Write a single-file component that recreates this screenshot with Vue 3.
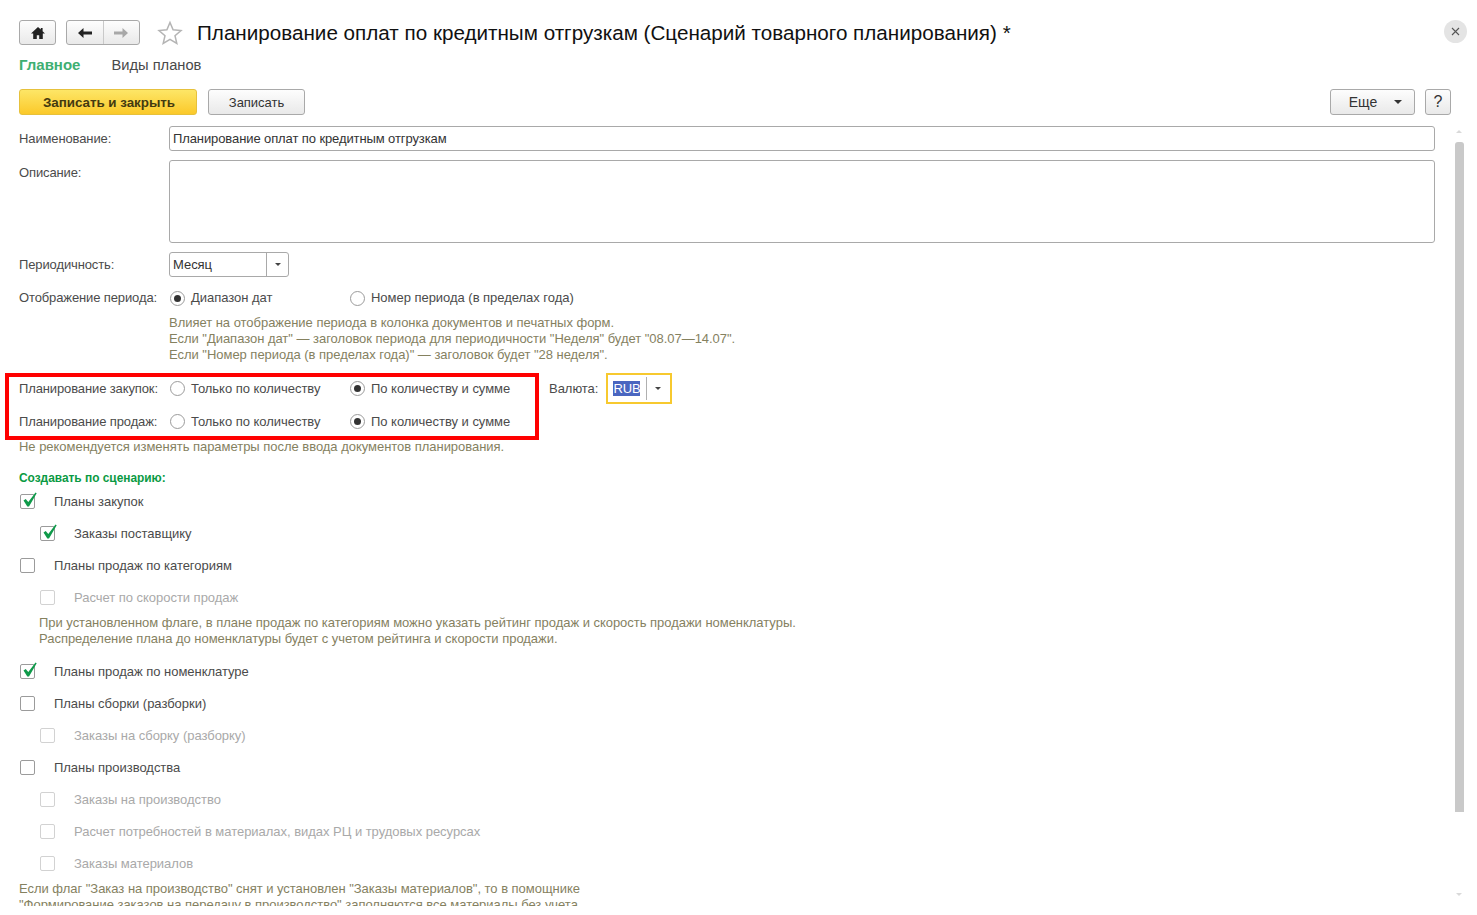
<script setup>
const hints = [
  'Влияет на отображение периода в колонка документов и печатных форм.',
  'Если "Диапазон дат" — заголовок периода для периодичности "Неделя" будет "08.07—14.07".',
  'Если "Номер периода (в пределах года)" — заголовок будет "28 неделя".'
]
const plan = ['Планирование закупок:', 'Планирование продаж:']
const groupA = [
  { text: 'Планы закупок', on: true },
  { text: 'Заказы поставщику', on: true, sub: true },
  { text: 'Планы продаж по категориям' },
  { text: 'Расчет по скорости продаж', sub: true, off: true }
]
const groupB = [
  { text: 'Планы продаж по номенклатуре', on: true },
  { text: 'Планы сборки (разборки)' },
  { text: 'Заказы на сборку (разборку)', sub: true, off: true },
  { text: 'Планы производства' },
  { text: 'Заказы на производство', sub: true, off: true },
  { text: 'Расчет потребностей в материалах, видах РЦ и трудовых ресурсах', sub: true, off: true },
  { text: 'Заказы материалов', sub: true, off: true }
]
</script>

<template>
  <div class="page">
    <header class="top">
      <button class="btn home" aria-label="Домой">
        <svg width="16" height="14" viewBox="0 0 16 14"><path d="M8 1 1 7.4h2.2V13h3.6V9.2h2.4V13h3.600V7.400H15L12.600 5.200V2h-1.800v1.500z" fill="#222"/></svg>
      </button>
      <div class="btn nav">
        <span class="nav-cell first">
          <svg width="16" height="12" viewBox="0 0 16 12"><path d="M1 6l5.500-5v3.400H15v3.200H6.500V11z" fill="#222"/></svg>
        </span>
        <span class="nav-cell">
          <svg width="16" height="12" viewBox="0 0 16 12"><path d="M15 6 9.500 1v3.400H1v3.200h8.500V11z" fill="#a8a8a8"/></svg>
        </span>
      </div>
      <svg class="star" width="26" height="26" viewBox="0 0 26 26"><path d="M13 2.500l3.100 7.300 7.900.7-6 5.200 1.800 7.700L13 19.300l-6.800 4.100L8 15.700l-6-5.200 7.900-.7z" fill="#fff" stroke="#b4b4b4" stroke-width="1.500"/></svg>
      <h1 class="title">Планирование оплат по кредитным отгрузкам (Сценарий товарного планирования) *</h1>
      <span class="close">
        <svg width="9" height="9" viewBox="0 0 9 9"><path d="M1 1l7 7M8 1 1 8" stroke="#555" stroke-width="1.100"/></svg>
      </span>
    </header>

    <nav class="tabs">
      <span class="tab active">Главное</span>
      <span class="tab">Виды планов</span>
    </nav>

    <div class="commands">
      <button class="btn primary">Записать и закрыть</button>
      <button class="btn save">Записать</button>
      <span class="spacer"></span>
      <button class="btn more">Еще<i class="arrow"></i></button>
      <button class="btn help">?</button>
    </div>

    <div class="form">
      <div class="row r-name">
        <label class="lbl">Наименование:</label>
        <div class="field">Планирование оплат по кредитным отгрузкам</div>
      </div>
      <div class="row r-desc">
        <label class="lbl">Описание:</label>
        <div class="field area"></div>
      </div>
      <div class="row r-period">
        <label class="lbl">Периодичность:</label>
        <div class="combo"><span class="combo-val">Месяц</span><span class="combo-btn"><i class="arrow small"></i></span></div>
      </div>
      <div class="row r-view">
        <label class="lbl">Отображение периода:</label>
        <span class="radio w180"><i class="dot on"></i>Диапазон дат</span>
        <span class="radio"><i class="dot"></i>Номер периода (в пределах года)</span>
      </div>
      <div class="note period-note">
        <div v-for="h in hints" :key="h">{{ h }}</div>
      </div>

      <div class="plan">
        <div class="plan-rows">
          <div v-for="p in plan" :key="p" class="row plan-row">
            <label class="lbl">{{ p }}</label>
            <span class="radio w180"><i class="dot"></i>Только по количеству</span>
            <span class="radio"><i class="dot on"></i>По количеству и сумме</span>
          </div>
        </div>
        <div class="currency">
          <span class="cur-lbl">Валюта:</span>
          <div class="cur-box"><span class="cur-sel">RUB</span><span class="cur-sep"></span><i class="arrow small"></i></div>
        </div>
        <div class="redbox"></div>
      </div>

      <div class="warn">Не рекомендуется изменять параметры после ввода документов планирования.</div>
      <div class="section">Создавать по сценарию:</div>

      <div class="checks">
        <div v-for="c in groupA" :key="c.text" class="check" :class="{ sub: c.sub, off: c.off }">
          <span class="box">
            <svg v-if="c.on" class="tick" width="17" height="17" viewBox="0 0 17 17"><path d="M2.500 8.500l2.200-1.500 2.600 3L14.500.5l1.200.8L8 14.500H6.300z" fill="#0f9a4a"/></svg>
          </span>
          <span>{{ c.text }}</span>
        </div>
      </div>
      <div class="note cat-note">
        <div>При установленном флаге, в плане продаж по категориям можно указать рейтинг продаж и скорость продажи номенклатуры.</div>
        <div>Распределение плана до номенклатуры будет с учетом рейтинга и скорости продажи.</div>
      </div>
      <div class="checks second">
        <div v-for="c in groupB" :key="c.text" class="check" :class="{ sub: c.sub, off: c.off }">
          <span class="box">
            <svg v-if="c.on" class="tick" width="17" height="17" viewBox="0 0 17 17"><path d="M2.500 8.500l2.200-1.500 2.600 3L14.500.5l1.200.8L8 14.500H6.300z" fill="#0f9a4a"/></svg>
          </span>
          <span>{{ c.text }}</span>
        </div>
      </div>
      <div class="note last-note">
        <div>Если флаг "Заказ на производство" снят и установлен "Заказы материалов", то в помощнике</div>
        <div>"Формирование заказов на передачу в производство" заполняются все материалы без учета</div>
      </div>
    </div>

    <div class="scroll">
      <i class="sc-up"></i>
      <i class="sc-thumb"></i>
      <i class="sc-down"></i>
    </div>
  </div>
</template>

<style>
html, body { margin: 0; background: #fff; overflow: hidden; }
</style>

<style scoped>
.page {
  position: relative;
  height: 906px;
  overflow: hidden;
  background: #fff;
  font: 13px/16px "Liberation Sans", Arial, sans-serif;
  letter-spacing: -0.03px;
  color: #4b4b4b;
  box-sizing: border-box;
  padding-left: 19px;
}
.top { display: flex; align-items: center; height: 25px; padding-top: 20px; position: relative; }
.btn {
  box-sizing: border-box;
  border: 1px solid #a9a9a9;
  border-radius: 3px;
  background: linear-gradient(#fdfdfd, #e9e9e9);
  font: inherit;
  letter-spacing: inherit;
  color: #333;
  padding: 0;
  display: inline-flex;
  align-items: center;
  justify-content: center;
}
.home { width: 37px; height: 25px; }
.nav { width: 74px; height: 25px; margin-left: 10px; }
.nav-cell { flex: 1; height: 100%; display: flex; align-items: center; justify-content: center; }
.nav-cell.first { border-right: 1px solid #c9c9c9; }
.star { margin-left: 17px; }
.title { margin: 0 0 0 14px; font: 400 20.650px/26px "Liberation Sans", Arial, sans-serif; letter-spacing: 0; color: #111; white-space: nowrap; }
.close {
  position: absolute; left: 1425px; top: 20px;
  width: 23px; height: 23px; border-radius: 50%; background: #e4e4e4;
  display: flex; align-items: center; justify-content: center;
}
.tabs { display: flex; height: 20px; margin-top: 10px; font-size: 14.700px; line-height: 20px; letter-spacing: 0; }
.tab { margin-right: 31px; color: #4a4a4a; }
.tab.active { color: #3eaf72; font-weight: 700; font-size: 15px; }
.commands { display: flex; align-items: center; width: 1432px; margin-top: 14px; height: 26px; }
.primary {
  width: 178px; height: 26px; font-weight: 700; color: #443a10; font-size: 13.400px; padding: 1px 0 0 2px;
  background: linear-gradient(#fde667, #fbc92a); border-color: #e6c13c;
}
.save { width: 97px; height: 26px; margin-left: 11px; padding-top: 1px; }
.spacer { flex: 1; }
.more { width: 85px; height: 26px; position: relative; padding-right: 19px; font-size: 14px; }
.more .arrow { position: absolute; right: 12px; top: 10px; }
.help { width: 26px; height: 26px; margin-left: 10px; font-size: 16px; }
.arrow { display: inline-block; width: 0; height: 0; border: 4px solid transparent; border-top: 4px solid #333; border-bottom: 0; }
.arrow.small { border-width: 3px 3px 0; border-top-color: #444; }

.form { width: 1416px; }
.row { display: flex; align-items: center; }
.lbl { width: 150px; flex: none; white-space: nowrap; letter-spacing: -0.12px; }
.field {
  box-sizing: border-box; flex: 1; height: 25px; border: 1px solid #a9a9a9; border-radius: 3px;
  padding: 0 3px; line-height: 23px; color: #333; background: #fff; letter-spacing: -0.1px;
}
.r-name { margin-top: 11px; height: 25px; }
.r-desc { margin-top: 9px; align-items: flex-start; }
.r-desc .lbl { margin-top: 5px; }
.area { height: 83px; }
.r-period { margin-top: 9px; height: 25px; }
.combo {
  box-sizing: border-box; width: 120px; height: 25px; border: 1px solid #a9a9a9; border-radius: 3px;
  display: flex; align-items: center; color: #333;
}
.combo-val { flex: 1; padding-left: 3px; }
.combo-btn { width: 21px; height: 100%; border-left: 1px solid #a9a9a9; display: flex; align-items: center; justify-content: center; }
.r-view { margin-top: 8px; height: 26px; }
.radio { display: inline-flex; align-items: center; white-space: nowrap; }
.w180 { width: 180px; flex: none; }
.dot {
  box-sizing: border-box; width: 15px; height: 15px; border-radius: 50%; border: 1px solid #9b9b9b; margin: 0 6px 0 1px;
  background: #fff; position: relative; flex: none;
}
.dot.on::after {
  content: ""; position: absolute; left: 3px; top: 3px; width: 7px; height: 7px; border-radius: 50%; background: #333;
}
.note { color: #85815f; white-space: nowrap; }
.period-note { margin: 4px 0 0 150px; }

.plan { position: relative; margin-top: 9px; height: 66px; display: flex; }
.plan-rows { width: 530px; flex: none; }
.plan-row { height: 33px; }
.currency { display: flex; align-items: center; height: 33px; }
.cur-lbl { margin-right: 8px; }
.cur-box {
  box-sizing: border-box; width: 66px; height: 31px; border: 2px solid #f7c92f;
  display: flex; align-items: center; padding-left: 5px;
}
.cur-sel { background: #4a66c0; color: #fff; width: 27px; line-height: 15px; }
.cur-sep { width: 1px; height: 23px; background: #b0b0b0; margin: 0 8px 0 6px; }
.redbox {
  position: absolute; left: -14px; top: 1px; width: 534px; height: 67px;
  box-sizing: border-box; border: 4px solid #f00; pointer-events: none;
}
.warn { color: #85815f; margin-top: 1px; height: 16px; }
.section { color: #0a9a43; font-weight: 700; font-size: 11.900px; letter-spacing: 0; margin-top: 15px; height: 16px; }
.check { display: flex; align-items: center; height: 32px; color: #4b4b4b; white-space: nowrap; }
.check.sub { padding-left: 20px; }
.check.off { color: #a9a9a9; }
.box {
  box-sizing: border-box; width: 15px; height: 15px; border: 1px solid #9b9b9b; border-radius: 2px; margin: 0 19px 1px 1px;
  position: relative; flex: none; background: #fff;
}
.off .box { border-color: #d2d2d2; }
.tick { position: absolute; left: 0; top: -3px; }
.cat-note { margin-left: 20px; margin-top: 1px; }
.checks.second { margin-top: 9px; }
.last-note { margin-top: 1px; }

.scroll { position: absolute; left: 1455px; top: 130px; width: 9px; height: 770px; }
.sc-thumb { position: absolute; left: 0; top: 12px; width: 9px; height: 670px; background: #c9c9c9; border-radius: 3px 3px 0 0; }
.sc-up, .sc-down { position: absolute; left: 1px; width: 0; height: 0; border: 3px solid transparent; }
.sc-up { top: 0; border-top: 0; border-bottom: 3px solid #d9d9d9; }
.sc-down { top: 763px; border-bottom: 0; border-top: 3px solid #d9d9d9; }
</style>
